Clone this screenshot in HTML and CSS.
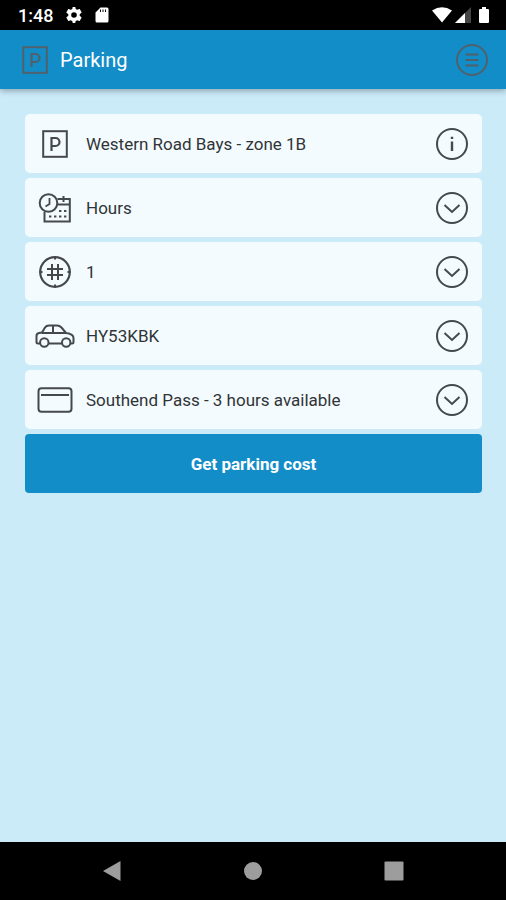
FILE: index.html
```html
<!DOCTYPE html>
<html lang="en">
<head>
  <meta charset="UTF-8" />
  <meta name="viewport" content="width=device-width, initial-scale=1.0"/>
  <title>Parking</title>
  <link rel="stylesheet" href="styles.css">
</head>
<body>
  <!-- Shared icons -->
  <svg class="sprite" aria-hidden="true">
    <symbol id="icon-parking" viewBox="0 0 26 28">
      <rect x="1.2" y="1.2" width="23.6" height="25.6"/>
      <path d="M9.500 21V8h4a4 4 0 0 1 0 8h-4" stroke-width="2.2"/>
    </symbol>
    <symbol id="icon-down" viewBox="0 0 34 34">
      <circle cx="17" cy="17" r="15"/>
      <path d="M9.5 14l7.5 7 7.5-7"/>
    </symbol>
  </svg>

  <div class="status-bar">
    <div class="status-left">
      <span class="time">1:48</span>
      <svg width="16" height="16" viewBox="0 0 24 24"><path fill="#fff" d="M20.5 13.3a9 9 0 0 0 0-2.6l2.7-2.1c.3-.2.3-.5.2-.8l-2.6-4.5c-.2-.3-.5-.4-.8-.3l-3.2 1.3a9 9 0 0 0-2.2-1.3L14.1.6c0-.3-.3-.6-.6-.6h-3c-.4 0-.6.2-.7.6L9.4 3a9 9 0 0 0-2.2 1.3L4 3c-.3-.1-.6 0-.8.3L.6 7.8c-.1.3-.1.6.2.8l2.7 2.1a9 9 0 0 0 0 2.6L.8 15.4c-.3.2-.3.5-.2.8l2.6 4.5c.2.3.5.4.8.3l3.2-1.3a9 9 0 0 0 2.2 1.3l.4 2.4c.1.4.3.6.7.6h3c.3 0 .6-.2.6-.6l.4-2.4a9 9 0 0 0 2.2-1.3l3.2 1.3c.3.1.6 0 .8-.3l2.6-4.5c.1-.3.1-.6-.2-.8zM12 16.2a4.2 4.2 0 1 1 0-8.4 4.2 4.2 0 0 1 0 8.4z"/></svg>
      <svg width="14" height="16" viewBox="0 0 14 16"><path fill="#fff" d="M5.5.5H12A1.5 1.5 0 0 1 13.5 2v12a1.5 1.5 0 0 1-1.5 1.5H2A1.5 1.5 0 0 1 .5 14V5.500z"/><path stroke="#000" stroke-width="1" d="M5.500 2.500v2.500M8 2.500v2.500M10.500 2.500v2.500"/></svg>
    </div>
    <div class="status-right">
      <svg width="20" height="16" viewBox="0 0 20 16"><path fill="#fff" d="M0 3.500Q10-3 20 3.500L10 15.500z"/></svg>
      <svg width="16" height="16" viewBox="0 0 16 16"><path fill="#444" d="M16 0v16H0z"/><path fill="#fff" d="M10 6v10H0z"/></svg>
      <svg class="status-battery" width="12" height="18" viewBox="0 0 12 18"><path fill="#fff" d="M4 1h4v2h2q1 0 1 1v12q0 1-1 1H2q-1 0-1-1V4q0-1 1-1h2z"/></svg>
    </div>
  </div>

  <header class="header">
    <svg class="line-icon" width="26" height="28"><use href="#icon-parking"/></svg>
    <h1>Parking</h1>
    <button type="button" aria-label="Menu">
      <svg class="line-icon" width="34" height="34" viewBox="0 0 34 34">
        <circle cx="17" cy="17" r="15"/>
        <path d="M10.5 11.500h13M10.5 17h13M10.5 22.500h13"/>
      </svg>
    </button>
  </header>

  <main class="content">
    <button class="row" type="button">
      <span class="row-icon"><svg class="line-icon" width="26" height="28"><use href="#icon-parking"/></svg></span>
      <span class="row-text">Western Road Bays - zone 1B</span>
      <svg class="line-icon" width="34" height="34" viewBox="0 0 34 34">
        <circle cx="17" cy="17" r="15"/>
        <path d="M17 14.5V24M17 9.8V12" stroke-width="2.4"/>
      </svg>
    </button>

    <button class="row" type="button">
      <span class="row-icon">
        <svg class="line-icon" width="34" height="32" viewBox="0 0 34 32">
          <circle cx="10.5" cy="11" r="8.8"/>
          <path d="M11.5 6v6l-4 2.500" stroke-width="1.8"/>
          <path d="M19.5 7h12.300v22.500H6.500V20M20 12.500h11.500M25.500 4v6"/>
          <path d="M21 19h2.400M26 19h2.400M11 24.500h2.400M16 24.500h2.400M21 24.500h2.400M26 24.500h2.400"/>
        </svg>
      </span>
      <span class="row-text">Hours</span>
      <svg class="line-icon" width="34" height="34"><use href="#icon-down"/></svg>
    </button>

    <button class="row" type="button">
      <span class="row-icon">
        <svg class="line-icon" width="34" height="34" viewBox="0 0 34 34">
          <circle cx="17" cy="17" r="14.8" stroke-width="2.2"/>
          <path d="M14 9v16M20 9v16M9 14h16M9 20h16M17 1.5v3M17 29.5v3M1.5 17h3M29.5 17h3"/>
        </svg>
      </span>
      <span class="row-text">1</span>
      <svg class="line-icon" width="34" height="34"><use href="#icon-down"/></svg>
    </button>

    <button class="row" type="button">
      <span class="row-icon">
        <svg class="line-icon" width="40" height="24" viewBox="0 0 40 24">
          <path d="M5 19.500H3Q1.500 19.500 1.500 18V12Q1.500 9.500 4 9L7 8.500 10 3.500Q11.200 1.500 14 1.500H22Q24.500 1.500 26.500 3.500L31 9Q38.500 10 38.500 14V18Q38.500 19.500 37 19.500H35.500M13.500 19.500H27M7 9H31M18 1.500V9"/>
          <circle cx="9.3" cy="18.5" r="4.2"/>
          <circle cx="31.2" cy="18.5" r="4.2"/>
        </svg>
      </span>
      <span class="row-text">HY53KBK</span>
      <svg class="line-icon" width="34" height="34"><use href="#icon-down"/></svg>
    </button>

    <button class="row" type="button">
      <span class="row-icon">
        <svg class="line-icon" width="36" height="26" viewBox="0 0 36 26">
          <rect x="1.5" y="1.2" width="33" height="23.6" rx="3"/>
          <path d="M4 8h28"/>
        </svg>
      </span>
      <span class="row-text">Southend Pass - 3 hours available</span>
      <svg class="line-icon" width="34" height="34"><use href="#icon-down"/></svg>
    </button>

    <button class="submit" type="button">Get parking cost</button>
  </main>

  <nav class="nav-bar">
    <button type="button" aria-label="Back"><svg width="20" height="20" viewBox="0 0 20 20"><path d="M1 10L18.500 0v20z"/></svg></button>
    <button type="button" aria-label="Home"><svg width="20" height="20" viewBox="0 0 20 20"><circle cx="10" cy="10" r="9"/></svg></button>
    <button type="button" aria-label="Recent apps"><svg width="20" height="20" viewBox="0 0 20 20"><rect x=".5" y=".5" width="19" height="19" rx="1"/></svg></button>
  </nav>
</body>
</html>
```
FILE: styles.css
```css
* {
  box-sizing: border-box;
}

body {
  margin: 0;
  min-height: 100vh;
  display: flex;
  flex-direction: column;
  font-family: Roboto, sans-serif;
  background: #cbebf9;
  color: #303437;
}

svg {
  display: block;
  flex-shrink: 0;
}

button {
  font-family: inherit;
  border: none;
  padding: 0;
  background: none;
  cursor: pointer;
}

.sprite {
  position: absolute;
  width: 0;
  height: 0;
}

.line-icon {
  fill: none;
  stroke: #45494c;
  stroke-width: 2;
}

/* Status bar */
.status-bar {
  height: 30px;
  padding: 0 16px 0 18px;
  display: flex;
  align-items: center;
  justify-content: space-between;
  background: #000;
  color: #fff;
}

.status-left, .status-right {
  display: flex;
  align-items: center;
}

.status-left {
  gap: 13px;
}

.status-right {
  gap: 3px;
}

.status-battery {
  margin-left: 4px;
}

.time {
  font-size: 18px;
  font-weight: 500;
}

/* Header */
.header {
  height: 59px;
  padding: 0 17px 0 22px;
  display: flex;
  align-items: center;
  gap: 12px;
  background: #128dc8;
  box-shadow: 0 2px 6px rgba(0,0,0,0.3);
}

.header .line-icon {
  stroke: #50616b;
}

.header h1 {
  flex: 1;
  margin: 0;
  font-size: 20px;
  font-weight: 400;
  color: #fff;
}

/* Booking options */
.content {
  flex: 1;
  padding: 25px 24px 25px 25px;
  display: flex;
  flex-direction: column;
  gap: 5px;
}

.row {
  height: 59px;
  padding: 0 13px 0 10px;
  display: flex;
  align-items: center;
  gap: 11px;
  border-radius: 5px;
  background: #f4fbfe;
  color: inherit;
  font-size: 17px;
  text-align: left;
}

.row-icon {
  width: 40px;
  display: flex;
  justify-content: center;
}

.row-text {
  flex: 1;
}

.submit {
  height: 59px;
  border-radius: 4px;
  background: #128dc8;
  color: #fff;
  font-size: 17px;
  font-weight: 700;
}

/* System navigation */
.nav-bar {
  height: 58px;
  padding: 0 42px;
  display: grid;
  grid-template-columns: repeat(3, 1fr);
  background: #000;
}

.nav-bar button {
  display: flex;
  align-items: center;
  justify-content: center;
}

.nav-bar svg {
  fill: #9d9d9d;
}
```
